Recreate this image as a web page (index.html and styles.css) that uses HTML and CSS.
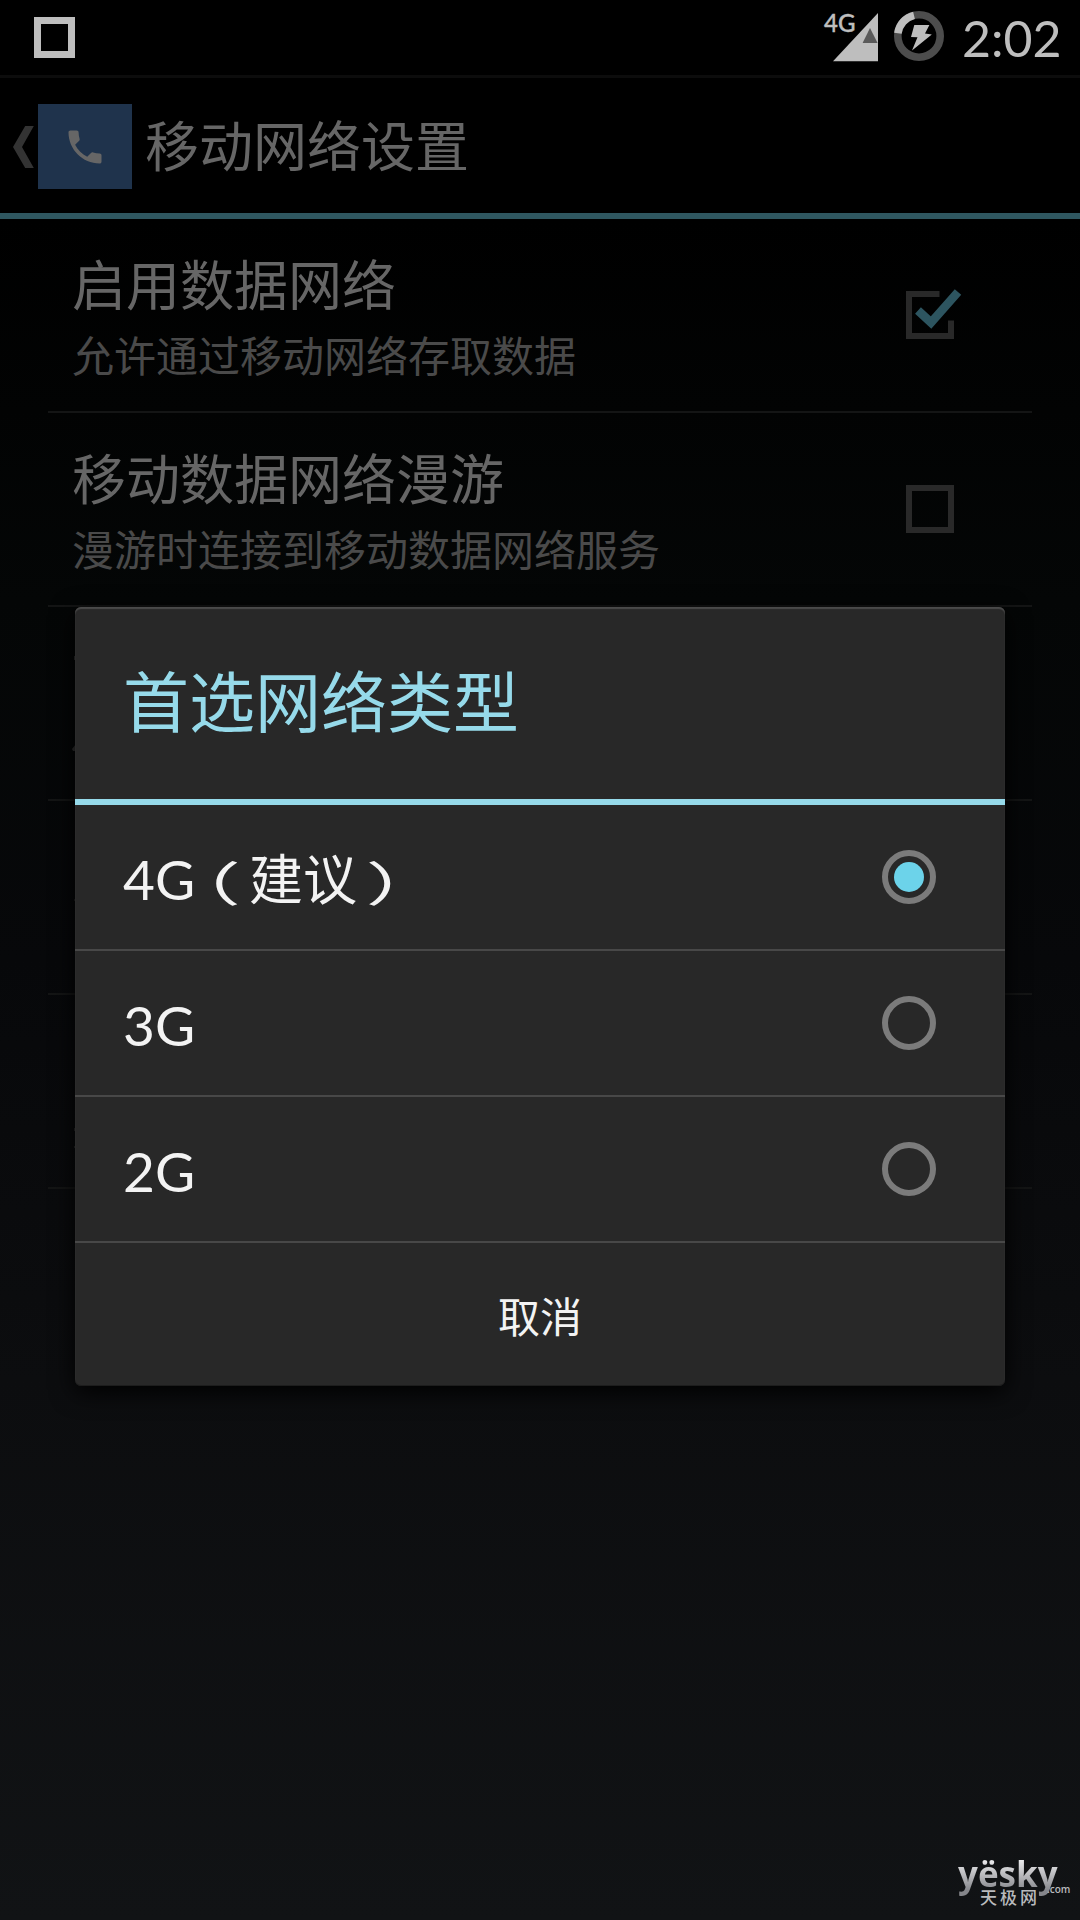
FILE: index.html
```html
<!DOCTYPE html>
<html lang="zh-CN">
<head>
<meta charset="utf-8">
<title>移动网络设置</title>
<link rel="stylesheet" href="styles.css">
</head>
<body>
<div class="screen">
  <div class="status-bar">
    <span class="notification"></span>
    <div class="status-icons">
      <svg class="signal" width="56" height="54" viewBox="0 0 56 54">
        <path d="M9 53.3H54V5z" fill="#bebebe"/>
        <path d="M46 20L53.6 35H38.6z" fill="#5a5a5a"/>
      </svg>
      <svg class="battery" width="50" height="50" viewBox="0 0 50 50">
        <circle cx="25" cy="25" r="21.2" fill="none" stroke="#4d4d4d" stroke-width="7.6"/>
        <path d="M3.9 22.2A21.2 21.2 0 0 1 20 4.4" fill="none" stroke="#bebebe" stroke-width="7.6"/>
        <path d="M20.3 14H35.4L31 22.6L37.8 23.4L18 39.4L23.5 26.2L17 26z" fill="#bebebe"/>
      </svg>
      <span class="clock">2:02</span>
    </div>
    <span class="network">4G</span>
  </div>
  <header class="action-bar">
    <svg class="back" width="22" height="42" viewBox="0 0 22 42"><path d="M12.2 0H20.8L9 21L20.8 42H12.2L0 21z" fill="#333"/></svg>
    <span class="app-icon">
      <svg width="44" height="44" viewBox="0 0 24 24"><path d="M6.62 10.79c1.44 2.83 3.76 5.14 6.59 6.59l2.2-2.2c.27-.27.67-.36 1.02-.24 1.12.37 2.33.57 3.57.57.55 0 1 .45 1 1V20c0 .55-.45 1-1 1C10.61 21 3 13.39 3 4c0-.55.45-1 1-1h3.5c.55 0 1 .45 1 1 0 1.25.2 2.45.57 3.57.11.35.03.74-.25 1.02l-2.2 2.2z" fill="#666"/></svg>
    </span>
    <h1>移动网络设置</h1>
  </header>
  <main class="preferences">
    <div class="preference">
      <div class="labels"><div class="name">启用数据网络</div><div class="summary">允许通过移动网络存取数据</div></div>
      <svg class="checkbox" width="60" height="52" viewBox="0 0 60 52">
        <path d="M33.5 5H3V47H45V31.5" fill="none" stroke="#292929" stroke-width="6"/>
        <path d="M12 21.5L25 33.5L52 3" fill="none" stroke="#2d5560" stroke-width="8.6"/>
      </svg>
    </div>
    <div class="preference">
      <div class="labels"><div class="name">移动数据网络漫游</div><div class="summary">漫游时连接到移动数据网络服务</div></div>
      <svg class="checkbox" width="60" height="52" viewBox="0 0 60 52">
        <path d="M3 5H45V47H3z" fill="none" stroke="#292929" stroke-width="6"/>
      </svg>
    </div>
    <div class="preference">
      <svg width="4" height="192" viewBox="0 0 4 192"><path d="M2 49h2v4h-2zM0 142l4-5v7h-3z" fill="#333"/></svg>
    </div>
    <div class="preference">
      <svg width="4" height="192" viewBox="0 0 4 192"><path d="M2 98h2v2h-2z" fill="#222"/></svg>
    </div>
    <div class="preference">
      <svg width="4" height="192" viewBox="0 0 4 192"><path d="M2 133h2v3h-2zM2 151h2v2h-2z" fill="#2c2c2c"/></svg>
    </div>
  </main>
  <section class="dialog">
    <h2>首选网络类型</h2>
    <div class="option"><span class="choice"><span class="latin">4G</span><span class="paren open">（</span>建议<span class="paren close">）</span></span><i class="radio selected"></i></div>
    <div class="option"><span class="choice latin">3G</span><i class="radio"></i></div>
    <div class="option"><span class="choice latin">2G</span><i class="radio"></i></div>
    <div class="cancel">取消</div>
  </section>
  <div class="watermark">
    <span class="brand">yësky</span><span class="domain">.com</span>
    <span class="brand-cn">天极网</span>
  </div>
</div>
</body>
</html>
```
FILE: styles.css
```css
* { box-sizing: border-box; }
body { margin: 0; background: #000; }
.screen {
  position: relative;
  width: 1080px;
  height: 1920px;
  overflow: hidden;
  font-family: Lato, "Noto Sans CJK SC", sans-serif;
  background: linear-gradient(#000 0, #000 220px, #040606 600px, #07080a 960px, #0c0d0f 1380px, #111315 1920px);
}
h1, h2 { margin: 0; font-weight: 400; }
.status-bar {
  position: relative;
  height: 78px;
  padding: 0 19px 0 34px;
  display: flex;
  justify-content: space-between;
  background: #000;
  border-bottom: 3px solid #0c0c0c;
}
.notification { width: 41px; height: 41px; margin-top: 17px; border: 7px solid #bebebe; }
.status-icons { display: flex; align-items: flex-start; }
.signal { margin-top: 8px; }
.battery { margin: 11px 18px 0 14px; }
.clock { width: 99px; font-size: 50px; line-height: 76px; color: #bebebe; white-space: nowrap; }
.network { position: absolute; left: 824px; top: 8px; font-size: 24px; line-height: 29px; font-weight: 500; color: #bebebe; -webkit-text-stroke: 0.4px #bebebe; }
.action-bar {
  height: 141px;
  padding-left: 13px;
  display: flex;
  align-items: center;
  background: #000;
  border-bottom: 6px solid #2f5760;
}
.back { margin: 3px 3px 0 0; }
.app-icon { width: 94px; height: 85px; margin: 2px 13px 0 0; display: flex; align-items: center; justify-content: center; background: #1f334c; }
h1 { font-size: 54px; line-height: 80px; padding-top: 2px; color: #666; }
.preferences { padding: 0 48px; }
.preference {
  height: 194px;
  padding: 0 66px 0 24px;
  display: flex;
  align-items: center;
  justify-content: space-between;
  border-bottom: 2px solid #141515;
}
.labels { padding-top: 3px; }
.name { font-size: 54px; line-height: 79px; color: #666; }
.summary { font-size: 42px; line-height: 62px; color: #4a4a4a; }
.dialog {
  position: absolute;
  left: 75px;
  top: 607px;
  width: 930px;
  height: 779px;
  border-radius: 6px;
  background: #282828;
  box-shadow: 0 6px 24px #000, inset 0 2px 1px #4a4a4a, inset 0 -1px 0 #1d1d1d;
}
h2 { height: 198px; padding-left: 48px; font-size: 66px; line-height: 190px; color: #96daea; border-bottom: 6px solid #96daea; }
.option {
  height: 146px;
  padding: 0 69px 0 48px;
  display: flex;
  align-items: center;
  justify-content: space-between;
  font-size: 54px;
  line-height: 80px;
  color: #f3f3f3;
  border-bottom: 2px solid #484848;
}
.choice { padding-top: 4px; }
.latin { font-size: 55px; }
/* The brackets sit near the middle of their full-width cells. */
.paren { display: inline-block; width: 54px; }
.open { transform-origin: 42px 50%; transform: translate(-14px, 4px) scale(1.5, 0.87); }
.close { transform-origin: 11px 50%; transform: translate(14px, 4px) scale(1.5, 0.87); }
.radio { width: 54px; height: 54px; padding: 6px; border: 6px solid #7b7b7b; border-radius: 50%; }
.selected::after { content: ""; display: block; width: 30px; height: 30px; border-radius: 50%; background: #6cd3ea; }
.cancel { font-size: 42px; line-height: 148px; height: 143px; text-align: center; color: #f3f3f3; }
.watermark {
  position: absolute;
  left: 958px;
  top: 1855px;
  width: 114px;
  height: 56px;
  font-family: "Open Sans", "Noto Sans CJK SC", sans-serif;
  color: #b9babd;
}
.brand, .domain, .brand-cn { position: absolute; white-space: nowrap; }
.brand {
  left: 0;
  top: -5px;
  font-size: 35px;
  line-height: 48px;
  font-weight: 700;
  background: linear-gradient(#ececee 20%, #85868b 85%);
  background-clip: text;
  color: transparent;
}
.domain { left: 89px; top: 27px; font-size: 10px; line-height: 14px; font-weight: 600; }
.brand-cn { left: 22px; top: 33px; font-size: 17px; line-height: 20px; letter-spacing: 3px; font-weight: 500; }
```
